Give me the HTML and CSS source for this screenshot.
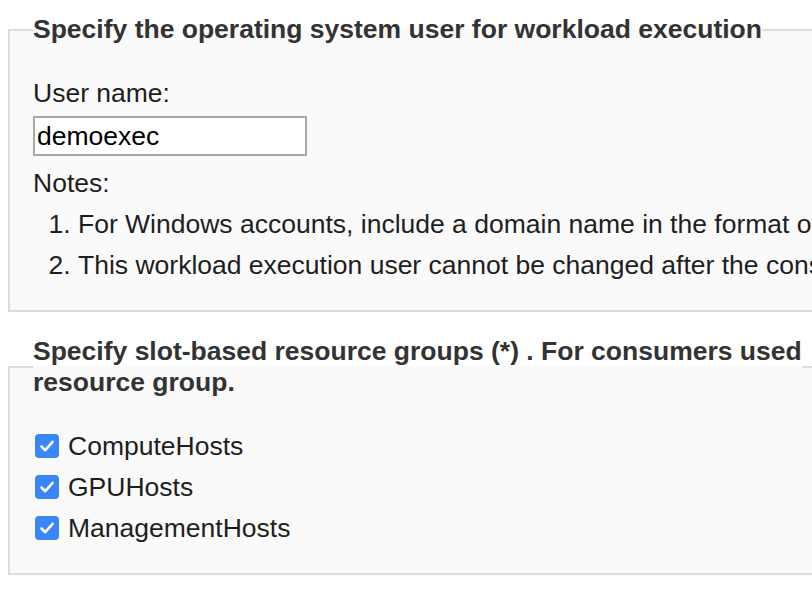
FILE: index.html
```html
<!DOCTYPE html>
<html>
<head>
<meta charset="utf-8">
<link rel="stylesheet" href="styles.css">
</head>
<body>
<div class="page">
  <fieldset class="group group-user">
    <legend class="group-title">Specify the operating system user for workload execution</legend>
    <div class="field-label">User name:</div>
    <input class="text-input" type="text" value="demoexec">
    <div class="notes-label">Notes:</div>
    <ol class="notes">
      <li>For Windows accounts, include a domain name in the format of DOMAIN\user.</li>
      <li>This workload execution user cannot be changed after the consumer is created.</li>
    </ol>
  </fieldset>

  <fieldset class="group group-rg">
    <legend class="group-title">Specify slot-based resource groups (*) . For consumers used<br>resource group.</legend>
    <div class="checks">
      <label class="check-row"><span class="check-box"><svg viewBox="0 0 24 24" width="24" height="24"><path d="M6.5 12.5 L10.3 16.2 L17.6 7.8" fill="none" stroke="#fff" stroke-width="2.6" stroke-linecap="round" stroke-linejoin="round"/></svg></span>ComputeHosts</label>
      <label class="check-row"><span class="check-box"><svg viewBox="0 0 24 24" width="24" height="24"><path d="M6.5 12.5 L10.3 16.2 L17.6 7.8" fill="none" stroke="#fff" stroke-width="2.6" stroke-linecap="round" stroke-linejoin="round"/></svg></span>GPUHosts</label>
      <label class="check-row"><span class="check-box"><svg viewBox="0 0 24 24" width="24" height="24"><path d="M6.5 12.5 L10.3 16.2 L17.6 7.8" fill="none" stroke="#fff" stroke-width="2.6" stroke-linecap="round" stroke-linejoin="round"/></svg></span>ManagementHosts</label>
    </div>
  </fieldset>
</div>
</body>
</html>
```

FILE: styles.css
```css
html, body {
  margin: 0;
  padding: 0;
  background: #ffffff;
  overflow: hidden;
}

body {
  font-family: "Liberation Sans", Arial, sans-serif;
  font-size: 26.5px;
  color: #1e1e1e;
}

.page {
  padding: 14px 0 0 8px;
  width: 1400px;
}

.group {
  margin: 0;
  padding: 0 0 31px 23px;
  border: 2px solid #dddddd;
  background: #fafafa;
  min-width: 0;
}

.group-title {
  padding: 0;
  font-weight: bold;
  font-size: 26.5px;
  line-height: 31px;
  color: #333333;
}

.group-rg {
  margin-top: 24px;
}

.field-label {
  margin-top: 34px;
  line-height: 28px;
}

.text-input {
  display: block;
  box-sizing: border-box;
  width: 274px;
  height: 40px;
  margin: 9px 0 0 0;
  padding: 0 2px;
  border: 2px solid #a9a9a9;
  background: #ffffff;
  font-family: "Liberation Sans", Arial, sans-serif;
  font-size: 26.5px;
  color: #000000;
  outline: none;
}

.notes-label {
  margin-top: 13px;
  line-height: 28px;
}

.notes {
  margin: 0;
  padding: 0 0 0 45px;
}

.notes li {
  margin-top: 13px;
  line-height: 28px;
  white-space: nowrap;
}

.checks {
  margin-top: 34px;
  display: flex;
  flex-direction: column;
  gap: 13px;
}

.check-row {
  display: flex;
  align-items: center;
  line-height: 28px;
  white-space: nowrap;
}

.check-box {
  display: flex;
  width: 24px;
  height: 24px;
  margin: 0 9px 0 2px;
  border-radius: 4px;
  background: #3b86f6;
}
```
